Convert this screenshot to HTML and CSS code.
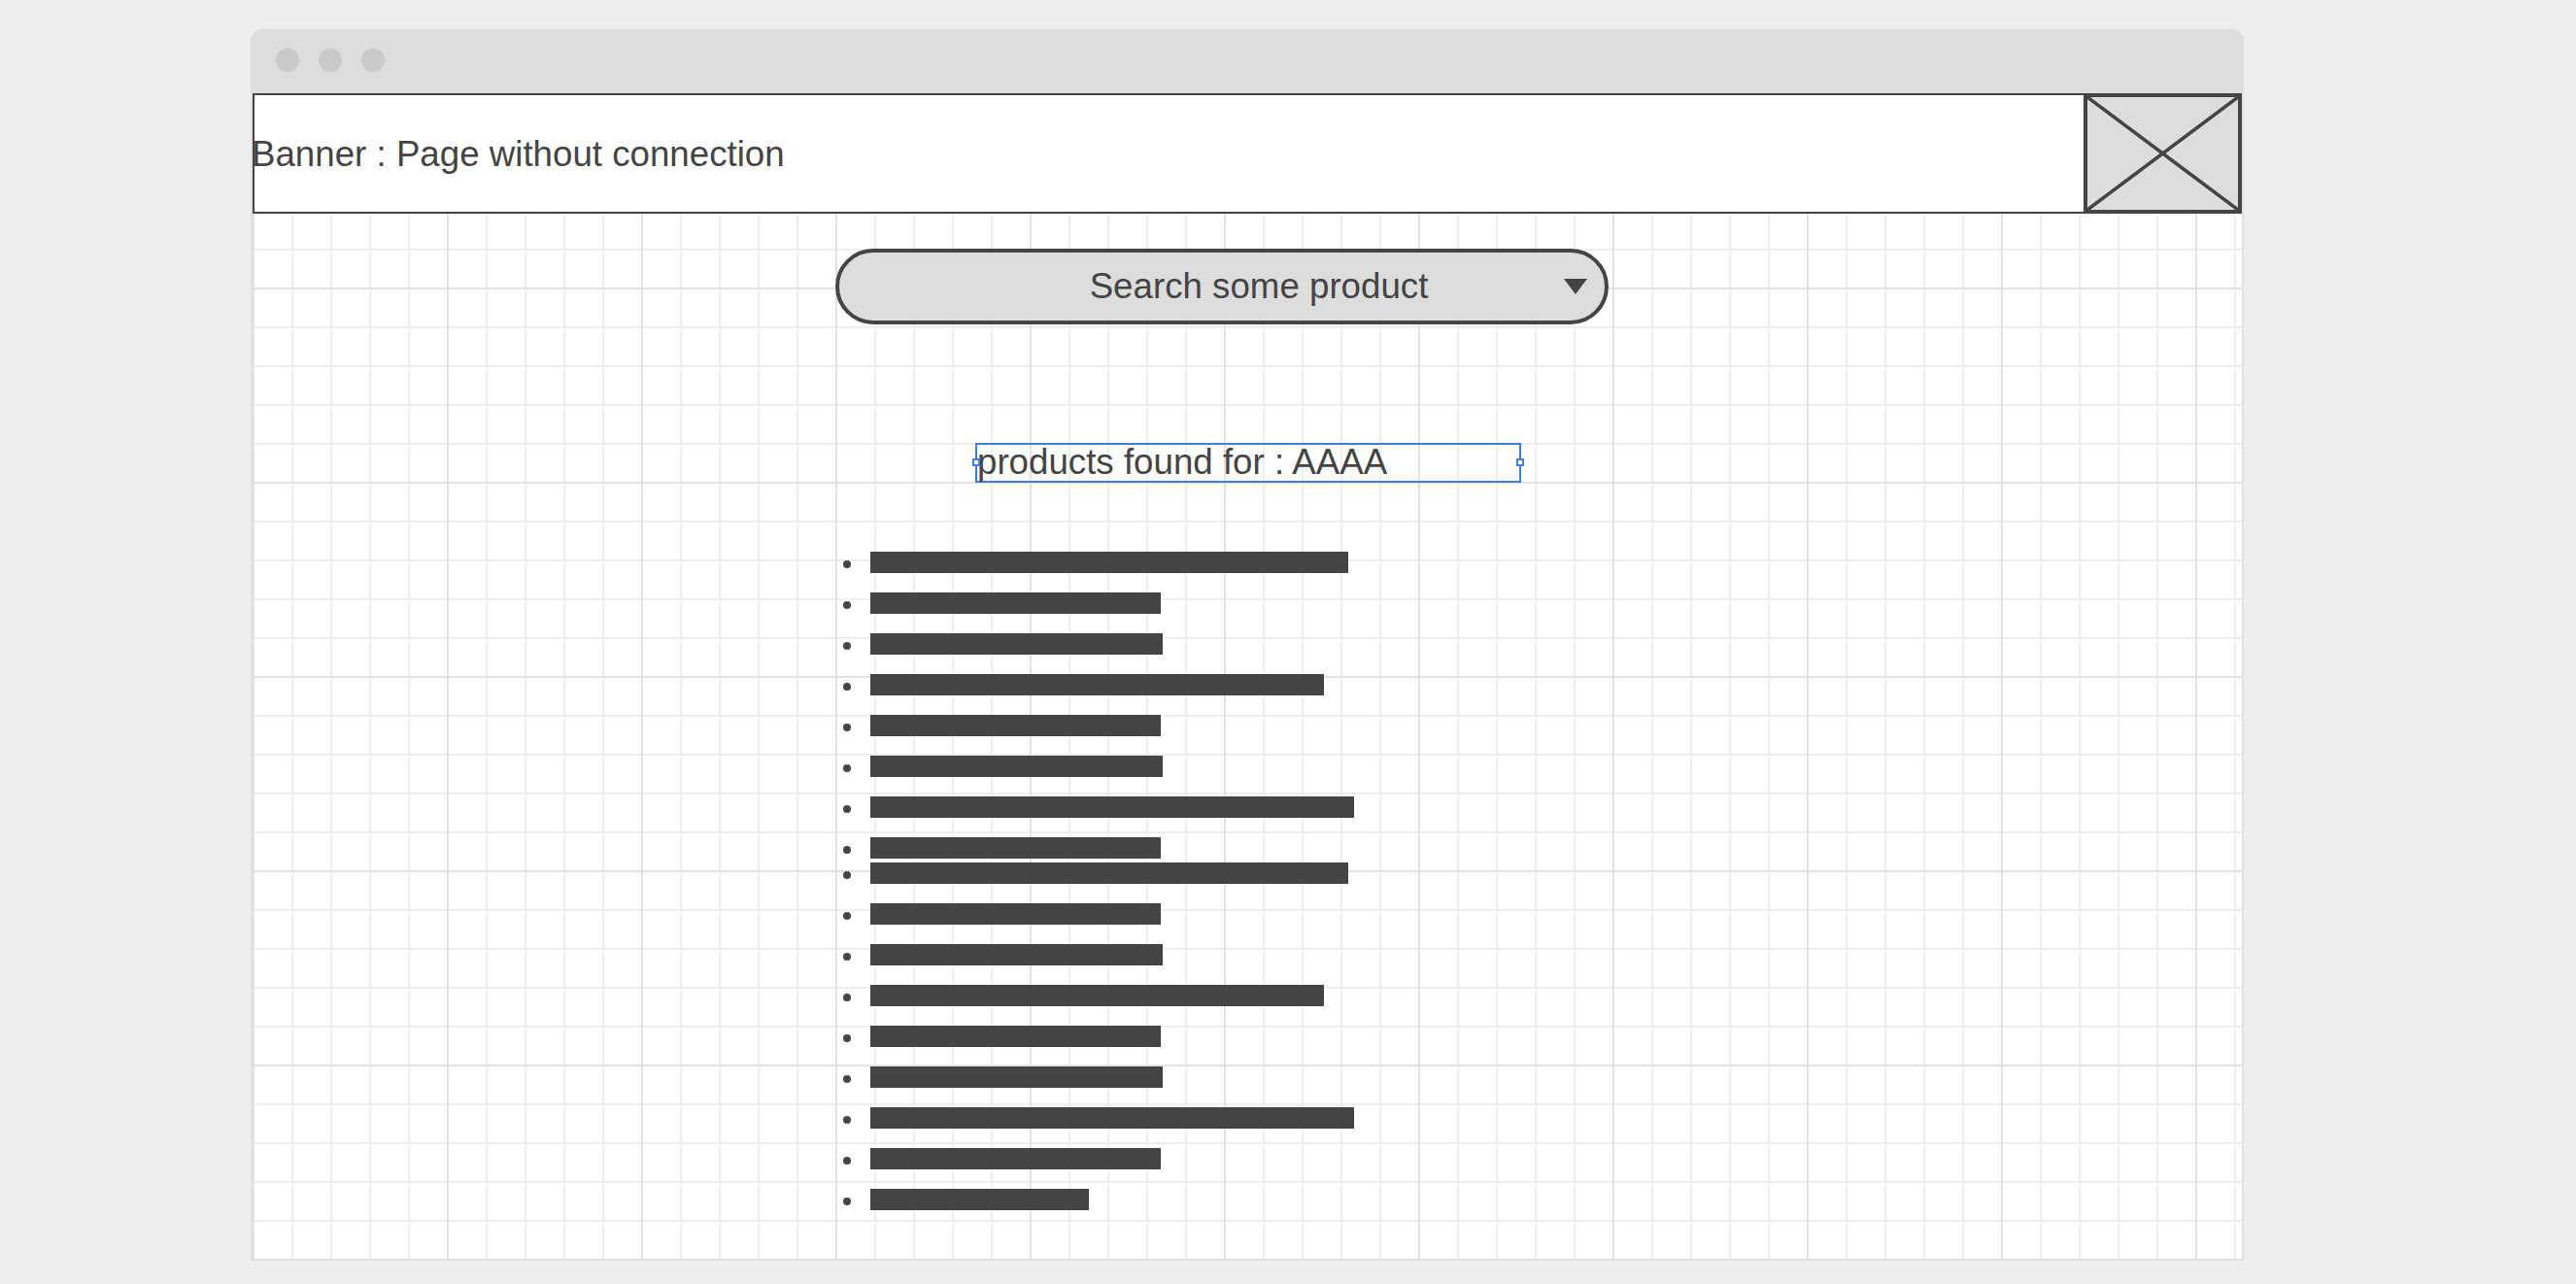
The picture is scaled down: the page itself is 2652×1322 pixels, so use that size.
FILE: index.html
```html
<!DOCTYPE html>
<html lang="en">
<head>
<meta charset="utf-8">
<title>Page without connection</title>
<link rel="stylesheet" href="styles.css">
</head>
<body>
<div class="window">
  <div class="titlebar">
    <span class="dot"></span><span class="dot"></span><span class="dot"></span>
  </div>
  <div class="canvas">
    <div class="banner">
      <div class="banner-text">Banner : Page without connection</div>
      <div class="banner-img">
        <svg viewBox="0 0 155 116" preserveAspectRatio="none" width="155" height="116">
          <line x1="0" y1="0" x2="155" y2="116"/>
          <line x1="155" y1="0" x2="0" y2="116"/>
        </svg>
      </div>
    </div>

    <div class="search">
      <span class="search-label">Search some product</span>
      <span class="caret"></span>
    </div>

    <div class="found">products found for : AAAA
      <span class="handle handle-l"></span>
      <span class="handle handle-r"></span>
    </div>

    <ul class="list list-a">
      <li><span class="bar" style="width:492px"></span></li>
      <li><span class="bar" style="width:299px"></span></li>
      <li><span class="bar" style="width:301px"></span></li>
      <li><span class="bar" style="width:467px"></span></li>
      <li><span class="bar" style="width:299px"></span></li>
      <li><span class="bar" style="width:301px"></span></li>
      <li><span class="bar" style="width:498px"></span></li>
      <li><span class="bar" style="width:299px"></span></li>
    </ul>

    <ul class="list list-b">
      <li><span class="bar" style="width:492px"></span></li>
      <li><span class="bar" style="width:299px"></span></li>
      <li><span class="bar" style="width:301px"></span></li>
      <li><span class="bar" style="width:467px"></span></li>
      <li><span class="bar" style="width:299px"></span></li>
      <li><span class="bar" style="width:301px"></span></li>
      <li><span class="bar" style="width:498px"></span></li>
      <li><span class="bar" style="width:299px"></span></li>
      <li><span class="bar" style="width:225px"></span></li>
    </ul>
  </div>
</div>
</body>
</html>
```

FILE: styles.css
```css
html, body {
  margin: 0;
  padding: 0;
}
body {
  background: #eeeeee;
  font-family: "Liberation Sans", Arial, sans-serif;
  color: #444444;
  width: 2652px;
  height: 1322px;
  overflow: hidden;
}
.window {
  margin: 30px 0 0 258px;
  width: 2052px;
}
.titlebar {
  height: 66px;
  background: #dddddd;
  border-radius: 12px 12px 0 0;
  display: flex;
  align-items: center;
  gap: 20px;
  padding-left: 26px;
  box-sizing: border-box;
}
.dot {
  width: 24px;
  height: 24px;
  border-radius: 50%;
  background: #c9c9c9;
  margin-top: -2px;
}
.canvas {
  position: relative;
  width: 2048px;
  height: 1200px;
  border: 2px solid #e2e2e2;
  border-top: none;
  background-color: #ffffff;
  background-image:
    linear-gradient(to right, #e2e2e2 2px, transparent 2px),
    linear-gradient(to bottom, #e2e2e2 2px, transparent 2px),
    linear-gradient(to right, #eeeeee 2px, transparent 2px),
    linear-gradient(to bottom, #eeeeee 2px, transparent 2px);
  background-size: 200px 200px, 200px 200px, 40px 40px, 40px 40px;
}
.banner {
  position: absolute;
  left: 0;
  top: 0;
  width: 2048px;
  height: 124px;
  display: flex;
}
.banner-text {
  flex: 1;
  background: #ffffff;
  border: 2px solid #444444;
  border-right: none;
  display: flex;
  align-items: center;
  font-size: 36.7px;
  padding-top: 2px;
  text-indent: -3px;
  box-sizing: border-box;
}
.banner-img {
  width: 163px;
  height: 124px;
  background: #dddddd;
  border: 4px solid #444444;
  box-sizing: border-box;
}
.banner-img svg {
  display: block;
}
.banner-img line {
  stroke: #444444;
  stroke-width: 3.5;
}
.search {
  position: absolute;
  left: 600px;
  top: 160px;
  width: 796px;
  height: 78px;
  box-sizing: border-box;
  border: 4px solid #444444;
  border-radius: 40px;
  background: #dddddd;
  display: flex;
  align-items: center;
  justify-content: center;
  padding-left: 76px;
  font-size: 36.7px;
}
.caret {
  position: absolute;
  right: 18px;
  top: 27px;
  width: 0;
  height: 0;
  border-left: 12px solid transparent;
  border-right: 12px solid transparent;
  border-top: 16px solid #444444;
}
.found {
  position: absolute;
  left: 744px;
  top: 360px;
  width: 562px;
  height: 41px;
  box-sizing: border-box;
  border: 2px solid #3f7de3;
  display: flex;
  align-items: center;
  font-size: 36.7px;
  line-height: 1;
  white-space: nowrap;
}
.handle {
  position: absolute;
  top: 14px;
  width: 8px;
  height: 8px;
  box-sizing: border-box;
  border: 2px solid #3f7de3;
  background: #ffffff;
}
.handle-l { left: -5px; }
.handle-r { right: -5px; }
.list {
  position: absolute;
  left: 608px;
  margin: 0;
  padding: 0;
  list-style: none;
}
.list-a { top: 462px; }
.list-b { top: 782px; }
.list li {
  height: 42px;
  display: flex;
  align-items: center;
  gap: 20px;
}
.list li::before {
  content: "";
  width: 8px;
  height: 8px;
  border-radius: 50%;
  background: #444444;
  margin-top: 4px;
}
.bar {
  display: block;
  height: 22px;
  background: #444444;
}
```
